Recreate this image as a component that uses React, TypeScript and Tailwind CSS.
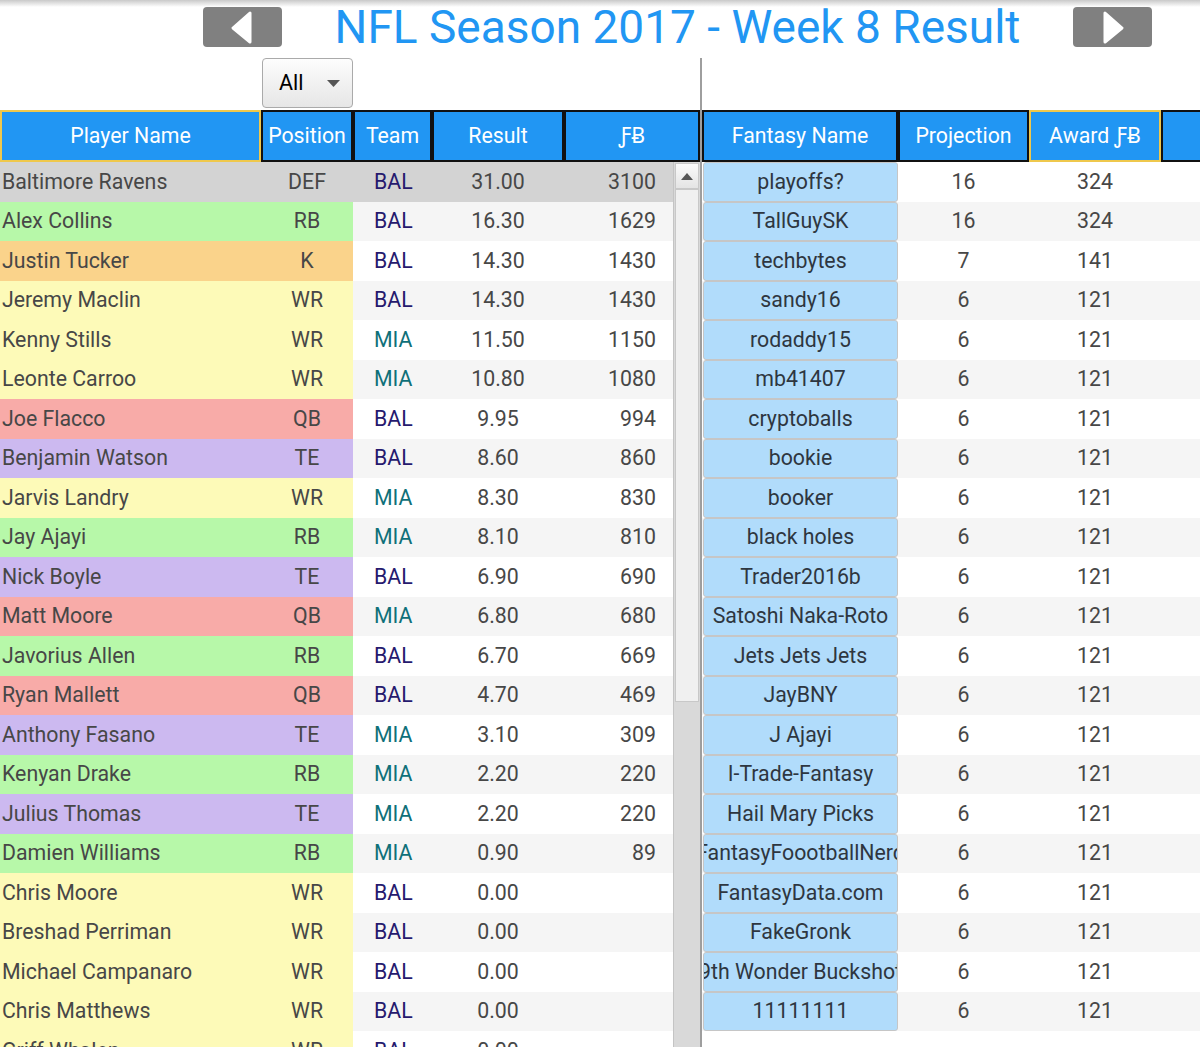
import React from 'react';

type P = { n: string; p: string; t: string; r: string; f: string };

const players: P[] = [
  { n: 'Baltimore Ravens', p: 'DEF', t: 'BAL', r: '31.00', f: '3100' },
  { n: 'Alex Collins', p: 'RB', t: 'BAL', r: '16.30', f: '1629' },
  { n: 'Justin Tucker', p: 'K', t: 'BAL', r: '14.30', f: '1430' },
  { n: 'Jeremy Maclin', p: 'WR', t: 'BAL', r: '14.30', f: '1430' },
  { n: 'Kenny Stills', p: 'WR', t: 'MIA', r: '11.50', f: '1150' },
  { n: 'Leonte Carroo', p: 'WR', t: 'MIA', r: '10.80', f: '1080' },
  { n: 'Joe Flacco', p: 'QB', t: 'BAL', r: '9.95', f: '994' },
  { n: 'Benjamin Watson', p: 'TE', t: 'BAL', r: '8.60', f: '860' },
  { n: 'Jarvis Landry', p: 'WR', t: 'MIA', r: '8.30', f: '830' },
  { n: 'Jay Ajayi', p: 'RB', t: 'MIA', r: '8.10', f: '810' },
  { n: 'Nick Boyle', p: 'TE', t: 'BAL', r: '6.90', f: '690' },
  { n: 'Matt Moore', p: 'QB', t: 'MIA', r: '6.80', f: '680' },
  { n: 'Javorius Allen', p: 'RB', t: 'BAL', r: '6.70', f: '669' },
  { n: 'Ryan Mallett', p: 'QB', t: 'BAL', r: '4.70', f: '469' },
  { n: 'Anthony Fasano', p: 'TE', t: 'MIA', r: '3.10', f: '309' },
  { n: 'Kenyan Drake', p: 'RB', t: 'MIA', r: '2.20', f: '220' },
  { n: 'Julius Thomas', p: 'TE', t: 'MIA', r: '2.20', f: '220' },
  { n: 'Damien Williams', p: 'RB', t: 'MIA', r: '0.90', f: '89' },
  { n: 'Chris Moore', p: 'WR', t: 'BAL', r: '0.00', f: '' },
  { n: 'Breshad Perriman', p: 'WR', t: 'BAL', r: '0.00', f: '' },
  { n: 'Michael Campanaro', p: 'WR', t: 'BAL', r: '0.00', f: '' },
  { n: 'Chris Matthews', p: 'WR', t: 'BAL', r: '0.00', f: '' },
  { n: 'Griff Whalen', p: 'WR', t: 'BAL', r: '0.00', f: '' },
];

const fantasy: [string, string, string][] = [
  ['playoffs?', '16', '324'],
  ['TallGuySK', '16', '324'],
  ['techbytes', '7', '141'],
  ['sandy16', '6', '121'],
  ['rodaddy15', '6', '121'],
  ['mb41407', '6', '121'],
  ['cryptoballs', '6', '121'],
  ['bookie', '6', '121'],
  ['booker', '6', '121'],
  ['black holes', '6', '121'],
  ['Trader2016b', '6', '121'],
  ['Satoshi Naka-Roto', '6', '121'],
  ['Jets Jets Jets', '6', '121'],
  ['JayBNY', '6', '121'],
  ['J Ajayi', '6', '121'],
  ['I-Trade-Fantasy', '6', '121'],
  ['Hail Mary Picks', '6', '121'],
  ['FantasyFoootballNerd', '6', '121'],
  ['FantasyData.com', '6', '121'],
  ['FakeGronk', '6', '121'],
  ['9th Wonder Buckshot', '6', '121'],
  ['11111111', '6', '121'],
];

const posBg: Record<string, string> = {
  DEF: 'bg-[#d3d3d3]',
  RB: 'bg-[#b7f8a9]',
  K: 'bg-[#fad38b]',
  WR: 'bg-[#fdfab8]',
  QB: 'bg-[#f8aba8]',
  TE: 'bg-[#ccb9f0]',
};

const FB = 'ƑɃ';

function HeadCell({ w, label, yellow }: { w: string; label: string; yellow?: boolean }) {
  return (
    <div
      className={`${w} shrink-0 h-full bg-[#2196f3] border-2 ${
        yellow ? 'border-[#efc84c]' : 'border-[#111111]'
      } flex items-center justify-center text-white text-[21.3px] whitespace-nowrap overflow-hidden`}
    >
      {label}
    </div>
  );
}

export default function App() {
  return (
    <div
      className="w-[1200px] h-[1047px] overflow-hidden bg-white text-[#474747]"
      style={{ fontFamily: 'Roboto, "Noto Sans", "DejaVu Sans", sans-serif' }}
    >
      {/* Title bar */}
      <div className="h-[58px] grid grid-cols-[203px_79px_1fr_79px_48px] bg-[linear-gradient(to_bottom,#c9c9c9_0px,#ffffff_7px)]">
        <div />
        <div className="mt-[7px] h-[40px] rounded-[4px] bg-[#808080] flex items-center justify-center">
          <svg width="79" height="40" viewBox="0 0 79 40">
            <polygon points="30,21 47,6 47,35" fill="#ffffff" stroke="#ffffff" strokeWidth="3" strokeLinejoin="round" />
          </svg>
        </div>
        <div className="flex justify-center">
          <div className="mt-[4px] text-[46px] leading-[46px] text-[#2196f3] whitespace-nowrap">
            NFL Season 2017 - Week 8 Result
          </div>
        </div>
        <div className="mt-[7px] h-[40px] rounded-[4px] bg-[#808080] flex items-center justify-center">
          <svg width="79" height="40" viewBox="0 0 79 40">
            <polygon points="32,6 32,35 49,21" fill="#ffffff" stroke="#ffffff" strokeWidth="3" strokeLinejoin="round" />
          </svg>
        </div>
        <div />
      </div>

      {/* Main */}
      <div className="flex h-[989px]">
        {/* Left panel */}
        <div className="w-[700px] shrink-0 flex flex-col">
          <div className="h-[52px] shrink-0 pl-[262px]">
            <div className="w-[91px] h-[50px] rounded-[4px] border border-[#aaaaaa] bg-[linear-gradient(to_bottom,#fdfdfd,#e6e6e6)] flex items-center justify-between pl-[16px] pr-[12px]">
              <span className="text-[21.5px] text-black">All</span>
              <svg width="13" height="7" viewBox="0 0 13 7">
                <polygon points="0,0 13,0 6.5,7" fill="#555555" />
              </svg>
            </div>
          </div>
          <div className="h-[52px] shrink-0 flex">
            <HeadCell w="w-[261px]" label="Player Name" yellow />
            <HeadCell w="w-[92px]" label="Position" />
            <HeadCell w="w-[79px]" label="Team" />
            <HeadCell w="w-[132px]" label="Result" />
            <HeadCell w="w-[136px]" label={FB} />
          </div>
          <div className="flex flex-1 overflow-hidden">
            <div className="w-[673px] shrink-0">
              {players.map((pl, i) => {
                const def = pl.p === 'DEF';
                const stripe = def ? 'bg-[#d3d3d3]' : i % 2 === 1 ? 'bg-[#f5f5f5]' : 'bg-white';
                return (
                  <div key={i} className={`flex h-[39.5px] text-[21.3px] ${stripe}`}>
                    <div className={`flex w-[353px] shrink-0 ${posBg[pl.p]}`}>
                      <div className="w-[261px] pl-[2px] flex items-center whitespace-nowrap">{pl.n}</div>
                      <div className="w-[92px] flex items-center justify-center">{pl.p}</div>
                    </div>
                    <div
                      className={`w-[79px] shrink-0 pl-[21px] flex items-center ${
                        pl.t === 'BAL' ? 'text-[#261a6e]' : 'text-[#0f7079]'
                      }`}
                    >
                      {pl.t}
                    </div>
                    <div className="w-[132px] shrink-0 flex items-center justify-center">{pl.r}</div>
                    <div className="w-[109px] shrink-0 pr-[17px] flex items-center justify-end">{pl.f}</div>
                  </div>
                );
              })}
            </div>
            {/* Scrollbar */}
            <div className="w-[27px] shrink-0 bg-[#d9d9d9] border-l border-[#c4c4c4] flex flex-col">
              <div className="h-[26px] shrink-0 mx-[1px] mt-[1px] bg-[linear-gradient(to_bottom,#fafafa,#e4e4e4)] border border-[#c8c8c8] flex items-center justify-center">
                <svg width="12" height="7" viewBox="0 0 12 7">
                  <polygon points="0,7 12,7 6,0" fill="#555555" />
                </svg>
              </div>
              <div className="h-[513px] shrink-0 mx-[1px] bg-[#f0f0f0] border border-[#c8c8c8]" />
            </div>
          </div>
        </div>

        {/* Divider */}
        <div className="w-[2px] shrink-0 bg-[#9e9e9e]" />

        {/* Right panel */}
        <div className="flex-1 flex flex-col overflow-hidden">
          <div className="h-[52px] shrink-0" />
          <div className="h-[52px] shrink-0 flex">
            <HeadCell w="w-[196px]" label="Fantasy Name" />
            <HeadCell w="w-[131px]" label="Projection" />
            <HeadCell w="w-[132px]" label={`Award ${FB}`} yellow />
            <HeadCell w="w-[130px]" label="" />
          </div>
          <div className="flex-1 overflow-hidden">
            {fantasy.map((row, i) => (
              <div
                key={i}
                className={`flex h-[39.5px] text-[21.3px] ${i % 2 === 1 ? 'bg-[#f5f5f5]' : 'bg-white'}`}
              >
                <div className="w-[196px] shrink-0 pl-[1px]">
                  <div className="h-full w-full bg-[#b1dcfb] border border-[#c6c6c6] rounded-[3px] flex items-center justify-center overflow-hidden whitespace-nowrap text-[#2e3640]">
                    {row[0]}
                  </div>
                </div>
                <div className="w-[131px] shrink-0 flex items-center justify-center">{row[1]}</div>
                <div className="w-[132px] shrink-0 flex items-center justify-center">{row[2]}</div>
                <div className="flex-1" />
              </div>
            ))}
          </div>
        </div>
      </div>
    </div>
  );
}
